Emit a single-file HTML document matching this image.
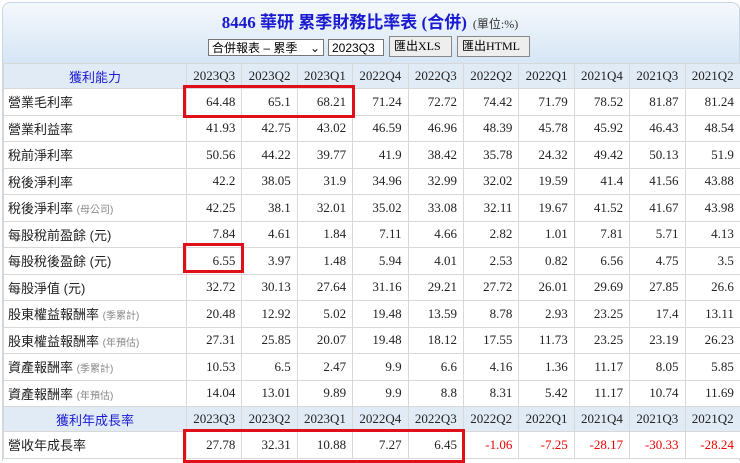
<!DOCTYPE html>
<html><head><meta charset="utf-8"><style>
body{margin:0;width:740px;height:460px;overflow:hidden;background:#fff;font-family:"Liberation Serif","Noto Sans CJK TC",serif;}
.wrap{position:absolute;left:2px;top:2px;width:736px;height:458px;border:1px solid #c9d6e3;border-bottom:none;border-radius:8px 8px 0 0;background:linear-gradient(#f4f8fc,#d6e6f5 60px,#fff 62px);}
.title{position:absolute;top:8px;left:0;width:740px;text-align:center;font-size:17px;font-weight:bold;color:#1a1ad0;font-family:"Liberation Serif","Noto Sans CJK TC",serif;}
.title small{font-size:12px;color:#333;font-weight:normal;margin-left:6px;}
.ctl{position:absolute;top:37px;font-size:12px;font-family:"Liberation Sans","Noto Sans CJK TC",sans-serif;}
.sel{border:1px solid #777;background:#fff;height:17px;line-height:17px;padding:0 3px;box-sizing:border-box;}
.btn{border:1px solid #888;background:#eee;height:21px;line-height:19px;padding:0 4px;box-sizing:border-box;font-family:"Liberation Serif","Noto Sans CJK TC",serif;}
table{position:absolute;left:3px;top:63px;border-collapse:collapse;table-layout:fixed;width:737px;}
td{border:1px solid #d8d8d8;font-size:13px;color:#222;padding:0 6px;height:25.5px;text-align:right;background:#fff;white-space:nowrap;}
td.l{text-align:left;font-family:"Liberation Sans","Noto Sans CJK TC",sans-serif;padding-left:4px;}
td.l span{font-size:10px;color:#888;}
tr.h td{background:#e1ebf6;text-align:center;height:24px;padding:0;}
tr.h td.l{text-align:center;color:#1a1ad0;}
.r{color:#e00;}
.box{position:absolute;border:3px solid #e0101a;box-sizing:border-box;}
</style></head><body>
<div class="wrap"></div>
<div class="title">8446 華研 累季財務比率表 (合併)<small>(單位:%)</small></div>
<div class="ctl sel" style="left:208px;top:39px;width:116px;">合併報表 – 累季 <span style="float:right">⌄</span></div>
<div class="ctl sel" style="left:328px;top:39px;width:56px;">2023Q3 ⌄</div>
<div class="ctl btn" style="left:389px;top:36px;width:63px;">匯出XLS</div>
<div class="ctl btn" style="left:457px;top:36px;width:73px;">匯出HTML</div>
<table>
<colgroup><col style="width:183px"><col span="10" style="width:55.4px"></colgroup>
<tr class="h"><td class="l">獲利能力</td><td>2023Q3</td><td>2023Q2</td><td>2023Q1</td><td>2022Q4</td><td>2022Q3</td><td>2022Q2</td><td>2022Q1</td><td>2021Q4</td><td>2021Q3</td><td>2021Q2</td></tr>
<tr><td class="l">營業毛利率</td><td>64.48</td><td>65.1</td><td>68.21</td><td>71.24</td><td>72.72</td><td>74.42</td><td>71.79</td><td>78.52</td><td>81.87</td><td>81.24</td></tr>
<tr><td class="l">營業利益率</td><td>41.93</td><td>42.75</td><td>43.02</td><td>46.59</td><td>46.96</td><td>48.39</td><td>45.78</td><td>45.92</td><td>46.43</td><td>48.54</td></tr>
<tr><td class="l">稅前淨利率</td><td>50.56</td><td>44.22</td><td>39.77</td><td>41.9</td><td>38.42</td><td>35.78</td><td>24.32</td><td>49.42</td><td>50.13</td><td>51.9</td></tr>
<tr><td class="l">稅後淨利率</td><td>42.2</td><td>38.05</td><td>31.9</td><td>34.96</td><td>32.99</td><td>32.02</td><td>19.59</td><td>41.4</td><td>41.56</td><td>43.88</td></tr>
<tr><td class="l">稅後淨利率 <span>(母公司)</span></td><td>42.25</td><td>38.1</td><td>32.01</td><td>35.02</td><td>33.08</td><td>32.11</td><td>19.67</td><td>41.52</td><td>41.67</td><td>43.98</td></tr>
<tr><td class="l">每股稅前盈餘 (元)</td><td>7.84</td><td>4.61</td><td>1.84</td><td>7.11</td><td>4.66</td><td>2.82</td><td>1.01</td><td>7.81</td><td>5.71</td><td>4.13</td></tr>
<tr><td class="l">每股稅後盈餘 (元)</td><td>6.55</td><td>3.97</td><td>1.48</td><td>5.94</td><td>4.01</td><td>2.53</td><td>0.82</td><td>6.56</td><td>4.75</td><td>3.5</td></tr>
<tr><td class="l">每股淨值 (元)</td><td>32.72</td><td>30.13</td><td>27.64</td><td>31.16</td><td>29.21</td><td>27.72</td><td>26.01</td><td>29.69</td><td>27.85</td><td>26.6</td></tr>
<tr><td class="l">股東權益報酬率 <span>(季累計)</span></td><td>20.48</td><td>12.92</td><td>5.02</td><td>19.48</td><td>13.59</td><td>8.78</td><td>2.93</td><td>23.25</td><td>17.4</td><td>13.11</td></tr>
<tr><td class="l">股東權益報酬率 <span>(年預估)</span></td><td>27.31</td><td>25.85</td><td>20.07</td><td>19.48</td><td>18.12</td><td>17.55</td><td>11.73</td><td>23.25</td><td>23.19</td><td>26.23</td></tr>
<tr><td class="l">資產報酬率 <span>(季累計)</span></td><td>10.53</td><td>6.5</td><td>2.47</td><td>9.9</td><td>6.6</td><td>4.16</td><td>1.36</td><td>11.17</td><td>8.05</td><td>5.85</td></tr>
<tr><td class="l">資產報酬率 <span>(年預估)</span></td><td>14.04</td><td>13.01</td><td>9.89</td><td>9.9</td><td>8.8</td><td>8.31</td><td>5.42</td><td>11.17</td><td>10.74</td><td>11.69</td></tr>
<tr class="h"><td class="l">獲利年成長率</td><td>2023Q3</td><td>2023Q2</td><td>2023Q1</td><td>2022Q4</td><td>2022Q3</td><td>2022Q2</td><td>2022Q1</td><td>2021Q4</td><td>2021Q3</td><td>2021Q2</td></tr>
<tr><td class="l">營收年成長率</td><td>27.78</td><td>32.31</td><td>10.88</td><td>7.27</td><td>6.45</td><td class="r">-1.06</td><td class="r">-7.25</td><td class="r">-28.17</td><td class="r">-30.33</td><td class="r">-28.24</td></tr>
</table>
<div class="box" style="left:183px;top:85px;width:172px;height:33px;"></div>
<div class="box" style="left:183px;top:243px;width:61px;height:30px;"></div>
<div class="box" style="left:183px;top:429px;width:282px;height:34px;"></div>
</body></html>
